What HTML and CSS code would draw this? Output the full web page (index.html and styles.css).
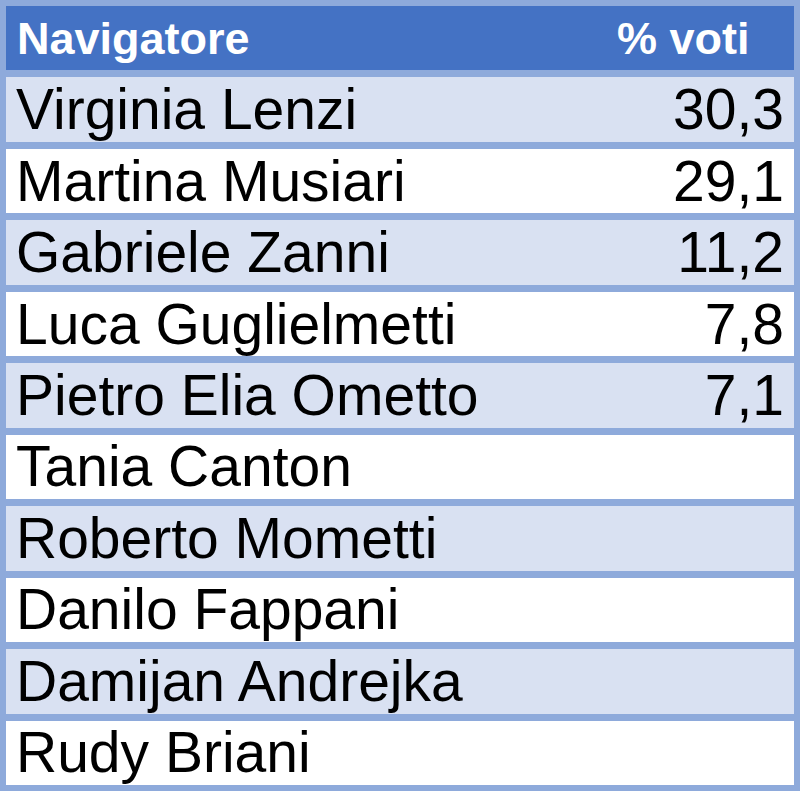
FILE: index.html
```html
<!DOCTYPE html>
<html lang="it">
<head>
<meta charset="utf-8">
<title>Navigatore</title>
<link rel="stylesheet" href="styles.css">
</head>
<body>
<div class="table">
  <div class="row head"><div class="name">Navigatore</div><div class="val">% voti</div></div>
  <div class="row odd"><div class="name">Virginia Lenzi</div><div class="val num">30,3</div></div>
  <div class="row even"><div class="name">Martina Musiari</div><div class="val num">29,1</div></div>
  <div class="row odd"><div class="name">Gabriele Zanni</div><div class="val num">11,2</div></div>
  <div class="row even"><div class="name">Luca Guglielmetti</div><div class="val num">7,8</div></div>
  <div class="row odd"><div class="name">Pietro Elia Ometto</div><div class="val num">7,1</div></div>
  <div class="row even"><div class="name">Tania Canton</div><div class="val num"></div></div>
  <div class="row odd"><div class="name">Roberto Mometti</div><div class="val num"></div></div>
  <div class="row even"><div class="name">Danilo Fappani</div><div class="val num"></div></div>
  <div class="row odd"><div class="name">Damijan Andrejka</div><div class="val num"></div></div>
  <div class="row even"><div class="name">Rudy Briani</div><div class="val num"></div></div>
</div>
</body>
</html>
```

FILE: styles.css
```css
html, body {
  margin: 0;
  padding: 0;
  background: #ffffff;
}
.table {
  box-sizing: border-box;
  width: 800px;
  height: 791px;
  background: #8eaadb;
  padding: 6px;
  display: grid;
  grid-template-rows: repeat(11, 1fr);
  row-gap: 7px;
  font-family: "Liberation Sans", Arial, sans-serif;
  color: #000000;
}
.row {
  display: grid;
  grid-template-columns: 1fr 187px;
  align-items: center;
  line-height: 1;
}
.head {
  background: #4472c4;
  color: #ffffff;
  font-weight: bold;
  font-size: 45px;
}
.odd {
  background: #d9e1f2;
  font-size: 57px;
}
.even {
  background: #ffffff;
  font-size: 57px;
}
.name {
  padding-left: 10px;
  white-space: nowrap;
}
.head .name {
  padding-left: 11px;
}
.val {
  padding-left: 10px;
  white-space: nowrap;
}
.num {
  text-align: right;
  padding-right: 10px;
}
```
